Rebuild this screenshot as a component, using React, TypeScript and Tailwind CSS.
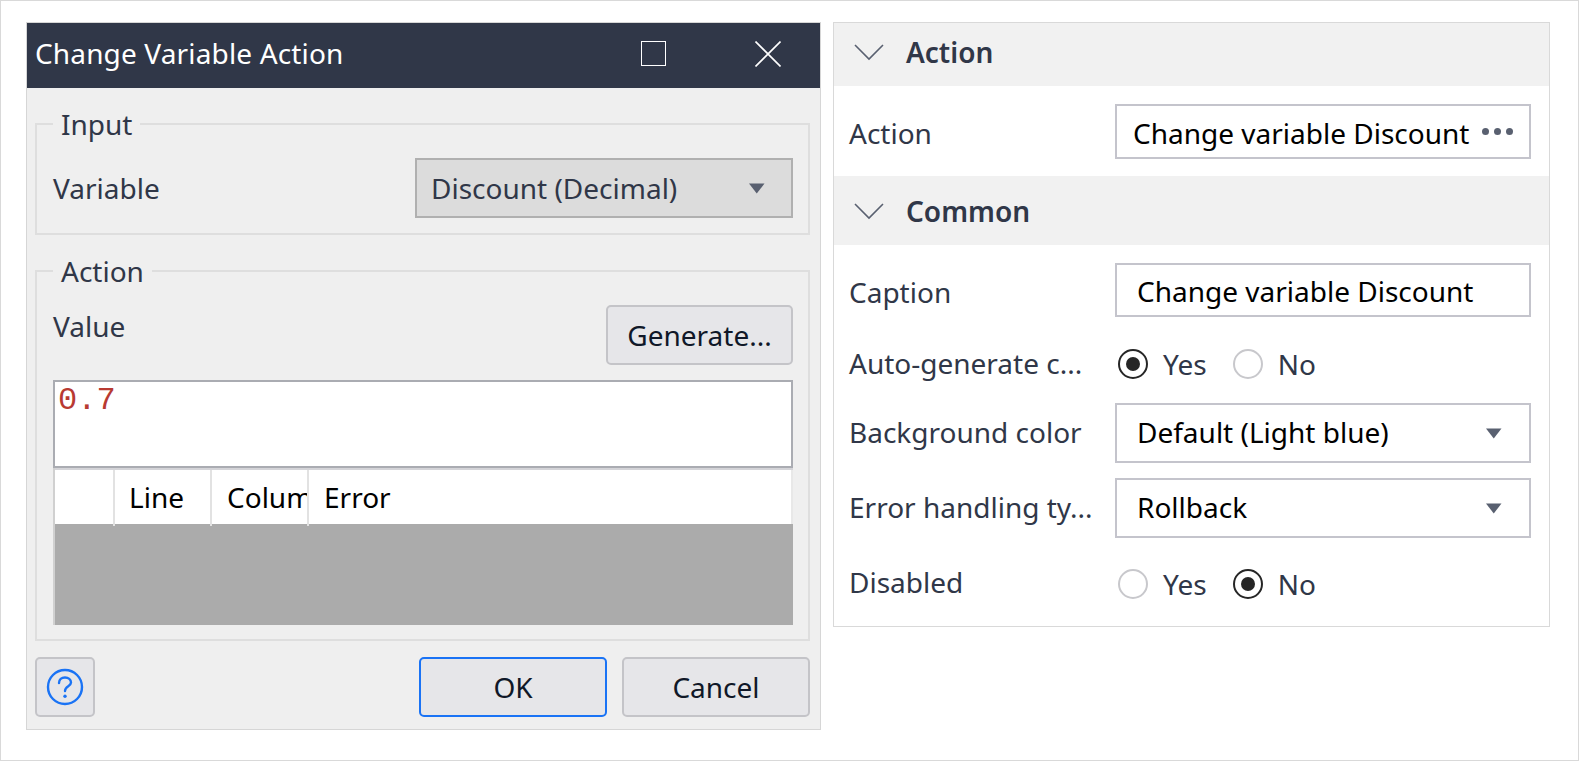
function Caret() {
  return (
    <svg width="16" height="11" viewBox="0 0 16 11">
      <path d="M0 0.5h15.5L7.75 10.5z" fill="#596070" />
    </svg>
  );
}

function Chevron() {
  return (
    <svg width="30" height="18" viewBox="0 0 30 18" fill="none" stroke="#596070" strokeWidth="1.6">
      <path d="M1 2l14 14L29 2" />
    </svg>
  );
}

function Radio({ checked, label }: { checked?: boolean; label: string }) {
  return (
    <div className="flex items-center gap-[15px]">
      <span
        className={`flex h-[30px] w-[30px] items-center justify-center rounded-full border-2 bg-white ${
          checked ? "border-[#262626]" : "border-[#c8c8cc]"
        }`}
      >
        {checked && <span className="h-[14px] w-[14px] rounded-full bg-[#262626]" />}
      </span>
      <span>{label}</span>
    </div>
  );
}

function SectionHeader({ title, className }: { title: string; className: string }) {
  return (
    <div className={`flex items-center bg-[#f1f1f1] pl-[20px] font-semibold ${className}`}>
      <Chevron />
      <span className="ml-[22px]">{title}</span>
    </div>
  );
}

function PropRow({
  label,
  labelClass = "",
  className,
  children,
}: {
  label: string;
  labelClass?: string;
  className: string;
  children: React.ReactNode;
}) {
  return (
    <div className={`flex items-center pl-[15px] ${className}`}>
      <span className={`w-[266px] shrink-0 whitespace-nowrap ${labelClass}`}>{label}</span>
      {children}
    </div>
  );
}

function PropBox({ className, children }: { className: string; children: React.ReactNode }) {
  return (
    <div className={`flex w-[416px] items-center justify-between border-2 border-[#c4c4cc] bg-white whitespace-nowrap text-black ${className}`}>
      {children}
    </div>
  );
}

function DialogButton({ className, children }: { className: string; children: React.ReactNode }) {
  return (
    <button className={`flex h-[60px] items-center justify-center rounded-[5px] border-2 bg-[#e6e6e9] text-[#101828] ${className}`}>
      {children}
    </button>
  );
}

export default function App() {
  return (
    <div className="flex h-[761px] w-[1579px] items-start border border-[#d9d9d9] bg-white pt-[21px] pl-[25px] font-['Noto_Sans',sans-serif] text-[28px] leading-[36px] text-[#303748]">
      {/* Dialog */}
      <div className="flex h-[708px] w-[795px] flex-col border border-[#d6d6d6] bg-[#efefef]">
        <div className="flex h-[65px] shrink-0 items-center bg-[#303748] pl-[8px] text-white">
          <span className="-mt-[5px] tracking-[0.15px]">Change Variable Action</span>
          <span className="-mt-[4px] ml-auto h-[25px] w-[25px] border-[1.5px] border-white" />
          <svg width="26" height="26" viewBox="0 0 26 26" stroke="#fff" strokeWidth="1.6" className="-mt-[4px] mr-[39px] ml-[89px]">
            <path d="M0.5 0.5l25 25M25.5 0.5l-25 25" />
          </svg>
        </div>

        <div className="flex flex-1 flex-col pr-[10px] pl-[8px]">
          <fieldset className="mt-[18px] h-[129px] border-2 border-[#dedede] pr-[15px] pl-[16px]">
            <legend className="px-[8px] leading-[36px]">Input</legend>
            <div className="mt-[16px] flex items-center justify-between">
              <span>Variable</span>
              <div className="flex h-[60px] w-[378px] items-center justify-between border-2 border-[#b0b0b0] bg-[#dcdcdc] pr-[26px] pl-[14px]">
                <span>Discount (Decimal)</span>
                <Caret />
              </div>
            </div>
          </fieldset>

          <fieldset className="mt-[18px] h-[388px] border-2 border-[#dedede] pr-[15px] pl-[16px]">
            <legend className="px-[8px] leading-[36px]">Action</legend>
            <div className="mt-[16px] flex items-start justify-between">
              <span className="mt-[3px]">Value</span>
              <DialogButton className="w-[187px] border-[#c4c4c8]">Generate...</DialogButton>
            </div>
            <div className="mt-[15px] h-[88px] border-2 border-[#aaacb2] bg-white pt-[1px] pl-[3px] font-['Liberation_Mono',monospace] text-[32px] leading-[36px] text-[#b83a32]">
              0.7
            </div>
            <div className="border-l-2 border-[#d0d0d0]">
              <div className="flex h-[56px] border-t-2 border-[#d4d4d8] bg-white text-black">
                <div className="w-[60px] border-r-2 border-[#e2e2e2]" />
                <div className="flex w-[97px] items-center overflow-hidden border-r-2 border-[#e2e2e2] pl-[14px]">Line</div>
                <div className="flex w-[97px] items-center overflow-hidden border-r-2 border-[#e2e2e2] pl-[15px] whitespace-nowrap">Column</div>
                <div className="flex flex-1 items-center border-r-2 border-[#e8e8e8] pl-[15px]">Error</div>
              </div>
              <div className="h-[101px] bg-[#ababab]">
                <div className="flex h-[2px]">
                  <div className="w-[60px] border-r-2 border-[#e2e2e2]" />
                  <div className="w-[97px] border-r-2 border-[#e2e2e2]" />
                  <div className="w-[97px] border-r-2 border-[#e2e2e2]" />
                </div>
              </div>
            </div>
          </fieldset>

          <div className="mt-[16px] flex">
            <DialogButton className="w-[60px] border-[#c4c4c8]">
              <svg width="38" height="38" viewBox="0 0 38 38" fill="none" stroke="#1a73f5" strokeWidth="2.4">
                <circle cx="19" cy="19" r="17" />
                <path d="M13 15c0-3.5 2.6-5.5 6-5.5s6 2 6 5c0 4-6 3.5-6 8.5" strokeLinecap="round" />
                <circle cx="19" cy="28.2" r="1.7" fill="#1a73f5" stroke="none" />
              </svg>
            </DialogButton>
            <DialogButton className="ml-auto w-[188px] border-[#1a73f5]">OK</DialogButton>
            <DialogButton className="ml-[15px] w-[188px] border-[#c4c4c8]">Cancel</DialogButton>
          </div>
        </div>
      </div>

      {/* Properties */}
      <div className="ml-[12px] h-[605px] w-[717px] border border-[#d9d9d9]">
        <SectionHeader title="Action" className="h-[63px] pb-[5px]" />
        <PropRow label="Action" labelClass="mt-[4px]" className="h-[90px]">
          <PropBox className="h-[55px] pr-[16px] pl-[16px]">
            <span className="mt-[4px]">Change variable Discount</span>
            <span className="flex gap-[5px]">
              <span className="h-[7px] w-[7px] rounded-full bg-[#596070]" />
              <span className="h-[7px] w-[7px] rounded-full bg-[#596070]" />
              <span className="h-[7px] w-[7px] rounded-full bg-[#596070]" />
            </span>
          </PropBox>
        </PropRow>
        <SectionHeader title="Common" className="h-[69px]" />
        <PropRow label="Caption" labelClass="mt-[4px]" className="mt-[18px] h-[54px]">
          <PropBox className="h-[54px] pr-[27px] pl-[20px]">
            <span className="mt-[2px]">Change variable Discount</span>
          </PropBox>
        </PropRow>
        <PropRow label="Auto-generate c..." labelClass="-mt-[3px]" className="mt-[17px] h-[60px]">
          <div className="flex gap-[26px] pl-[3px]">
            <Radio checked label="Yes" />
            <Radio label="No" />
          </div>
        </PropRow>
        <PropRow label="Background color" labelClass="-mt-[2px]" className="mt-[9px] h-[60px]">
          <PropBox className="h-[60px] pr-[27px] pl-[20px]">
            <span className="-mt-[2px]">Default (Light blue)</span>
            <Caret />
          </PropBox>
        </PropRow>
        <PropRow label="Error handling ty..." labelClass="-mt-[2px]" className="mt-[15px] h-[60px]">
          <PropBox className="h-[60px] pr-[27px] pl-[20px]">
            <span className="-mt-[2px]">Rollback</span>
            <Caret />
          </PropBox>
        </PropRow>
        <PropRow label="Disabled" labelClass="-mt-[4px]" className="mt-[16px] h-[60px]">
          <div className="flex gap-[26px] pl-[3px]">
            <Radio label="Yes" />
            <Radio checked label="No" />
          </div>
        </PropRow>
      </div>
    </div>
  );
}
